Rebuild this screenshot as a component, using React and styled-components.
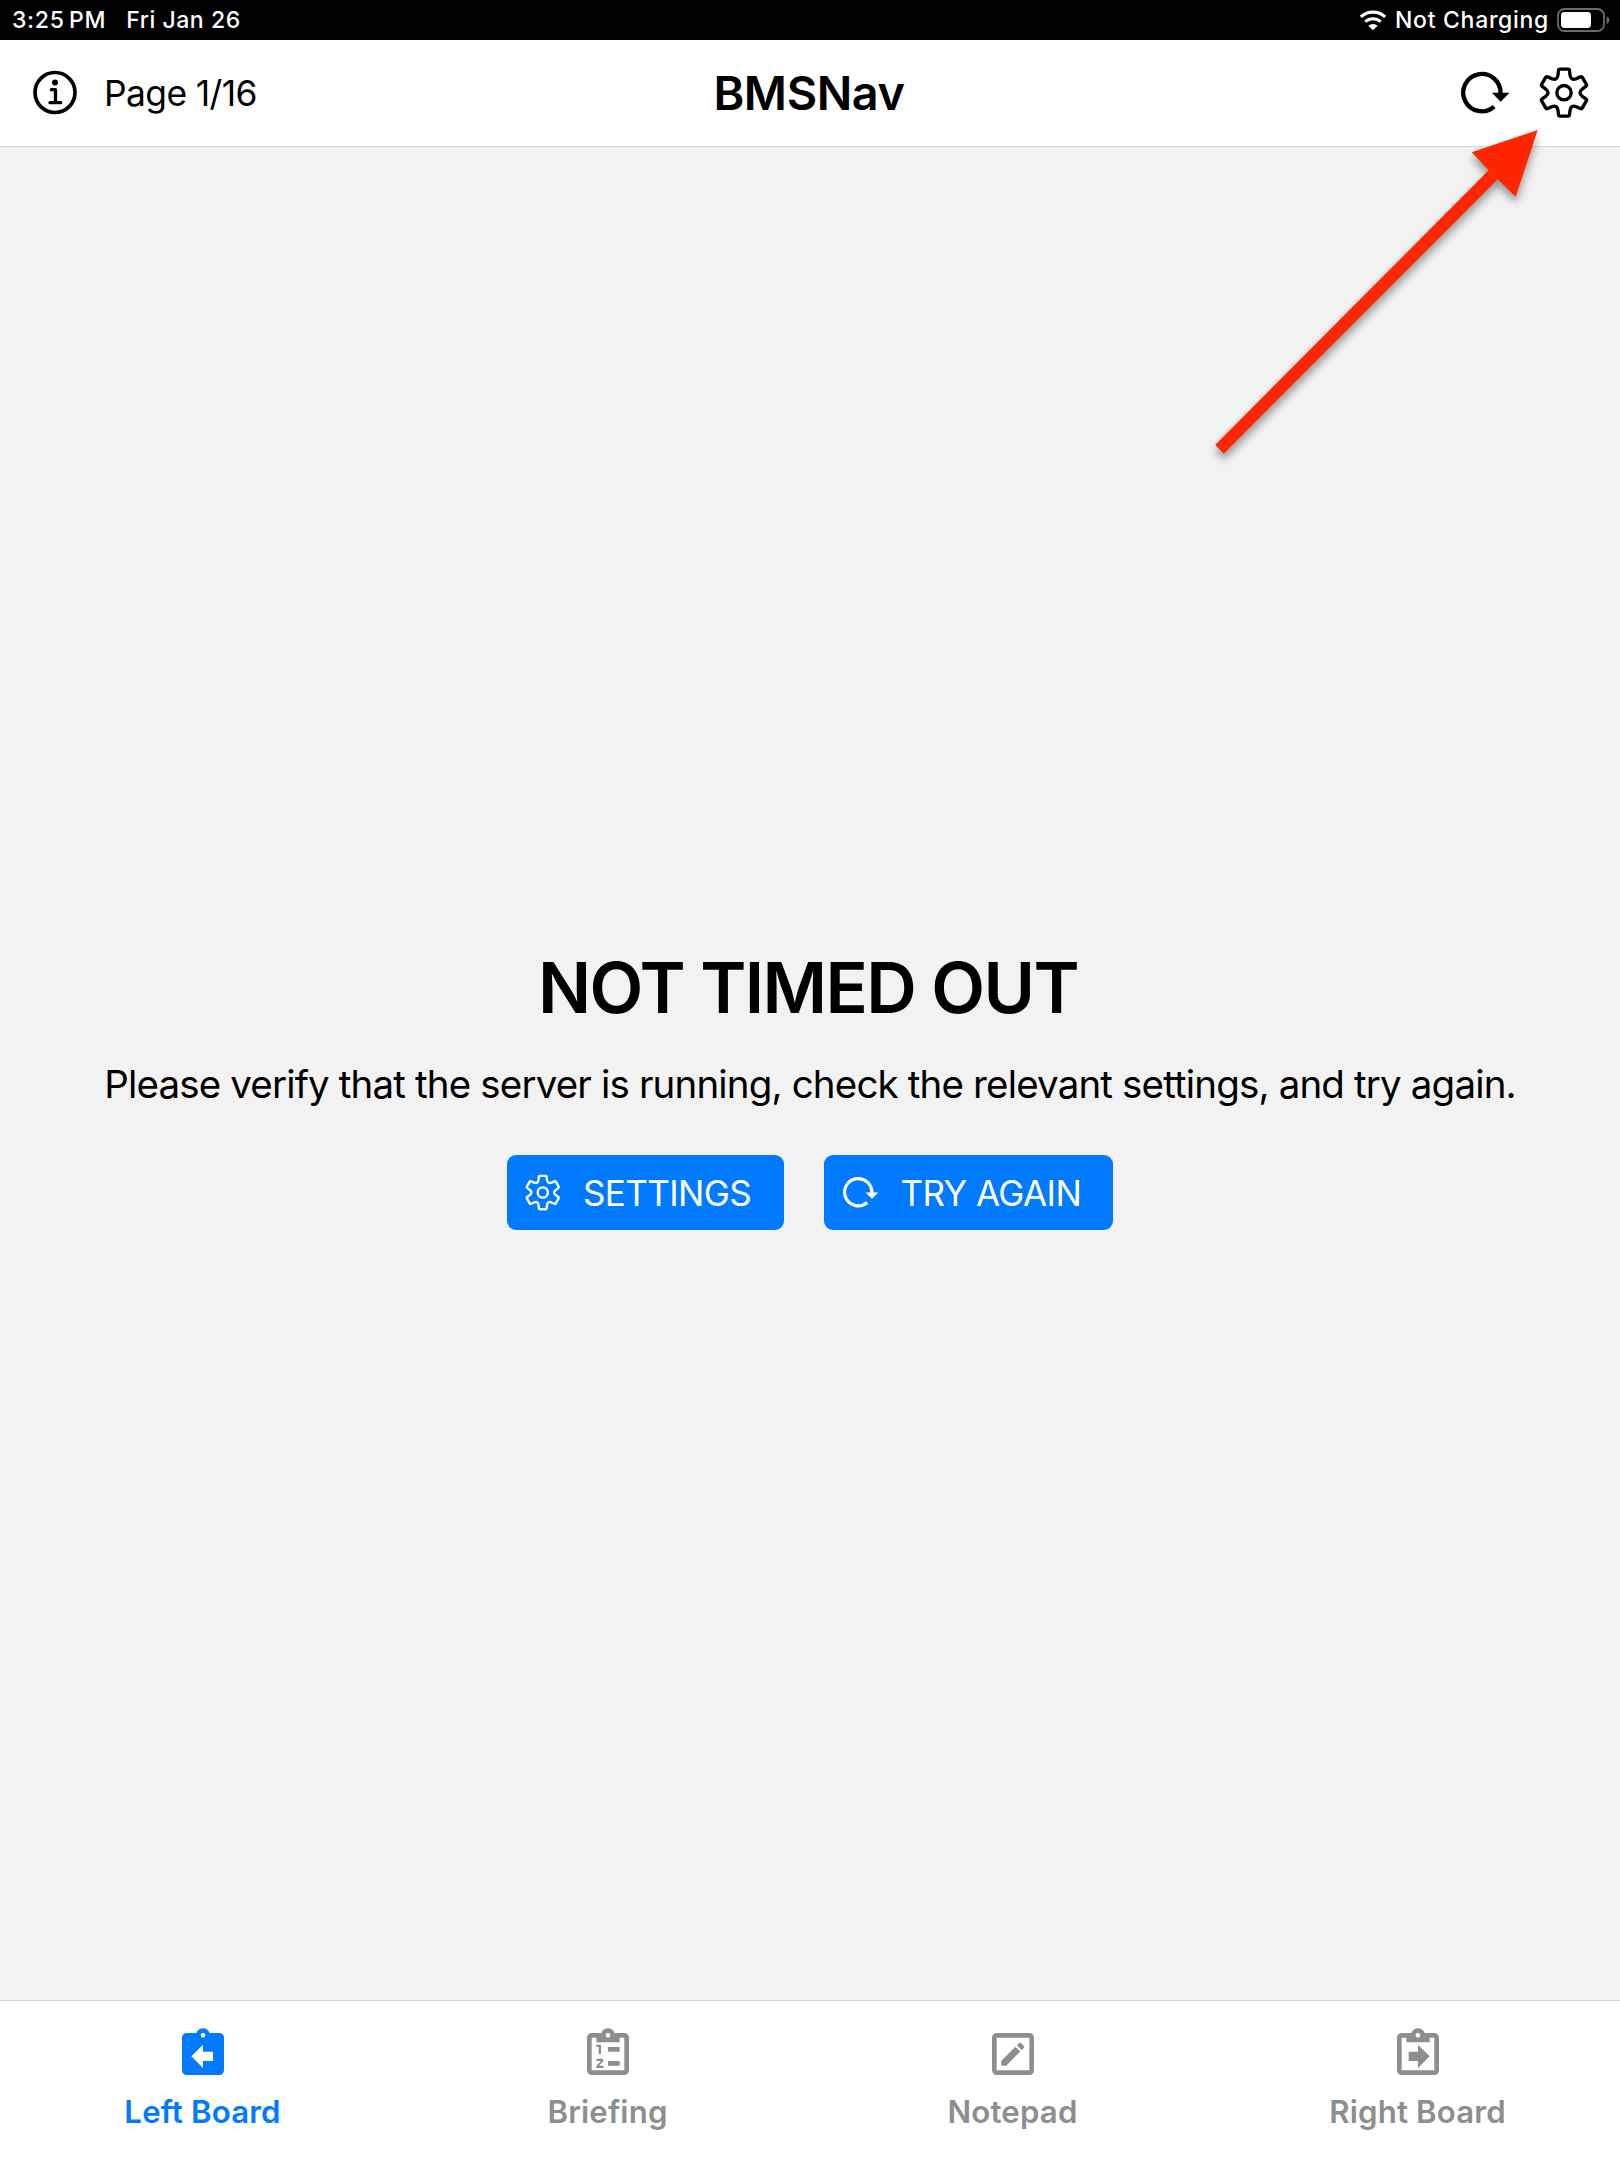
import React from "react";
import styled, { createGlobalStyle } from "styled-components";

const GlobalStyle = createGlobalStyle`
  * { box-sizing: border-box; }
  body {
    margin: 0;
    background: #f2f2f2;
    color: #000;
    font-family: Inter, "Liberation Sans", sans-serif;
  }
  svg { display: block; flex: none; overflow: visible; }
`;

const Screen = styled.div`
  position: relative;
  display: flex;
  flex-direction: column;
  width: 1620px;
  height: 2160px;
  overflow: hidden;
  background: #f2f2f2;
`;

const StatusBar = styled.div`
  display: flex;
  align-items: center;
  justify-content: space-between;
  height: 40px;
  padding: 0 10px 0 12px;
  background: #000;
  color: #fff;
  font-size: 23px;
  font-weight: 500;
  line-height: 40px;
  letter-spacing: 0.7px;
  white-space: nowrap;
`;

const StatusGroup = styled.div`
  display: flex;
  align-items: center;
  gap: ${(p) => p.$gap}px;
`;

const Clock = styled.span`
  word-spacing: -2.4px;
`;

const DateLabel = styled.span`
  letter-spacing: 0.55px;
`;

const Header = styled.header`
  display: grid;
  grid-template-columns: 1fr auto 1fr;
  align-items: center;
  height: 107px;
  padding: 0 31px 0 33px;
  background: #fff;
  border-bottom: 1px solid #d8d8d8;
  white-space: nowrap;
`;

const HeaderSide = styled.div`
  display: flex;
  align-items: center;
  justify-content: ${(p) => (p.$end ? "flex-end" : "flex-start")};
  gap: ${(p) => p.$gap}px;
`;

const PageLabel = styled.span`
  font-size: 35.4px;
  letter-spacing: -0.6px;
`;

const Title = styled.h1`
  margin: 0 4px 0 0;
  font-size: 46.8px;
  font-weight: 600;
  letter-spacing: -0.4px;
`;

const Content = styled.main`
  flex: 1;
  display: flex;
  flex-direction: column;
  align-items: center;
  padding-top: 800px;
`;

const Headline = styled.h2`
  margin: 0 4px 0 0;
  font-size: 70px;
  font-weight: 600;
  line-height: 81px;
  letter-spacing: -1.6px;
`;

const Message = styled.p`
  margin: 31px 0 46px;
  font-size: 38.5px;
  line-height: 50px;
  letter-spacing: -0.84px;
  white-space: nowrap;
`;

const Actions = styled.div`
  display: flex;
  gap: 40px;
`;

const ActionButton = styled.button`
  display: flex;
  align-items: center;
  gap: ${(p) => p.$gap}px;
  width: ${(p) => p.$width}px;
  height: 75px;
  padding: 0 0 0 ${(p) => p.$inset}px;
  border: 0;
  border-radius: 9px;
  background: #007aff;
  color: #fff;
  font: 400 35px Inter, "Liberation Sans", sans-serif;
  letter-spacing: -0.6px;
  white-space: nowrap;
`;

const TabBar = styled.nav`
  display: grid;
  grid-template-columns: repeat(4, 1fr);
  height: 160px;
  background: #fff;
  border-top: 1px solid #d8d8d8;
`;

const Tab = styled.div`
  display: flex;
  flex-direction: column;
  align-items: center;
  padding-top: 25px;
  gap: 10px;
  color: ${(p) => (p.$active ? "#007aff" : "#8e8e8f")};
  font-size: 31.2px;
  font-weight: 600;
  line-height: 40px;
  letter-spacing: 0.15px;
`;

const Pointer = styled.svg`
  position: absolute;
  left: 1200px;
  top: 120px;
  filter: drop-shadow(0 6px 4px rgba(0, 0, 0, 0.38));
  pointer-events: none;
`;

function WifiIcon() {
  return (
    <svg width="28" height="20" viewBox="-42 -60 84 60" fill="none" stroke="#fff">
      <path d="M-36.5 -39.1A53.5 53.5 0 0 1 36.5 -39.1" strokeWidth="9.5" />
      <path d="M-23.2 -24.9A34 34 0 0 1 23.2 -24.9" strokeWidth="9" />
      <path d="M0 1L-14 -12.5A20 20 0 0 1 14 -12.5Z" fill="#fff" stroke="none" />
    </svg>
  );
}

function BatteryIcon() {
  return (
    <svg width="53" height="24" viewBox="0 0 53 24">
      <rect x="1" y="1" width="46" height="22" rx="6.5" fill="none" stroke="#6c6c6c" strokeWidth="1.8" />
      <rect x="4" y="4" width="30" height="16" rx="3.4" fill="#fff" />
      <path d="M49.6 8.2C53.2 9.4 53.2 14.8 49.6 16Z" fill="#6c6c6c" />
    </svg>
  );
}

function InfoIcon() {
  return (
    <svg width="44" height="44" viewBox="-66 -64.5 132 132" fill="none" stroke="currentColor">
      <circle r="60" strokeWidth="11" />
      <circle cy="-30" r="9" fill="currentColor" stroke="none" />
      <path d="M-11 -8.5H1.5V30.5M-15 30.5H17" strokeWidth="10" strokeLinecap="round" strokeLinejoin="round" />
    </svg>
  );
}

const turn = ([x, y], deg) => {
  const a = (deg * Math.PI) / 180;
  const px = x * Math.cos(a) - y * Math.sin(a);
  const py = x * Math.sin(a) + y * Math.cos(a);
  return px.toFixed(2) + " " + py.toFixed(2);
};

const gearPath = (() => {
  let d = "M" + turn([-18, -53], 0);
  for (let k = 0; k < 6; k += 1) {
    const a = k * 60;
    d += `L${turn([-16.6, -66], a)}Q${turn([-16.2, -70.5], a)} ${turn([-12, -70.5], a)}`;
    d += `L${turn([12, -70.5], a)}Q${turn([16.2, -70.5], a)} ${turn([16.6, -66], a)}`;
    d += `L${turn([18, -53], a)}C${turn([20, -41], a)} ${turn([-20, -41], a + 60)} ${turn([-18, -53], a + 60)}`;
  }
  return d + "Z";
})();

function GearIcon({ size }) {
  return (
    <svg width={size} height={size} viewBox="-75 -74 150 150" fill="none" stroke="currentColor" strokeWidth="10">
      <path d={gearPath} strokeLinejoin="round" />
      <circle r="21.5" />
    </svg>
  );
}

function ReloadIcon({ size }) {
  return (
    <svg width={size} height={size} viewBox="-62.5 -71 146 146">
      <path d="M56 3A56 56 0 1 0 37 42" fill="none" stroke="currentColor" strokeWidth="13" />
      <path d="M30 0.5H83L56.5 27Z" fill="currentColor" />
    </svg>
  );
}

const tabPaths = {
  left: "M19 3h-4.18C14.4 1.84 13.3 1 12 1s-2.4.84-2.82 2H5a2 2 0 0 0-2 2v14a2 2 0 0 0 2 2h14a2 2 0 0 0 2-2V5a2 2 0 0 0-2-2zm-7 0a1 1 0 1 1 0 2 1 1 0 0 1 0-2zm4.3 12H12v3l-5-5 5-5v3h4.3z",
  briefing:
    "M19 3h-4.18C14.4 1.84 13.3 1 12 1s-2.4.84-2.82 2H5a2 2 0 0 0-2 2v14a2 2 0 0 0 2 2h14a2 2 0 0 0 2-2V5a2 2 0 0 0-2-2zm-7 0a1 1 0 1 1 0 2 1 1 0 0 1 0-2zM7 7h10V5h2v14H5V5h2zM12 9h5v2h-5zM12 15h5v2h-5zM7 8h2v4H8V9H7zM7 14h2.25a.75.75 0 0 1 .54 1.27L8.12 17H10v1H7v-.92L9 15H7z",
  notepad:
    "M19 19V5H5v14h14m0-16a2 2 0 0 1 2 2v14a2 2 0 0 1-2 2H5a2 2 0 0 1-2-2V5a2 2 0 0 1 2-2h14m-2.3 6.35l-1 1-2.05-2.05 1-1c.21-.22.56-.22.77 0l1.28 1.28c.22.21.22.56 0 .77M7 14.94l6.06-6.06 2.06 2.06L9.06 17H7v-2.06z",
  right:
    "M19 3h-4.18C14.4 1.84 13.3 1 12 1s-2.4.84-2.82 2H5a2 2 0 0 0-2 2v14a2 2 0 0 0 2 2h14a2 2 0 0 0 2-2V5a2 2 0 0 0-2-2zm-7 0a1 1 0 1 1 0 2 1 1 0 0 1 0-2zM7 7h10V5h2v14H5V5h2zM12 18l5-5-5-5v3H8v4h4z",
};

const tabs = [
  { id: "left", label: "Left Board", active: true },
  { id: "briefing", label: "Briefing" },
  { id: "notepad", label: "Notepad" },
  { id: "right", label: "Right Board" },
];

export default function App() {
  return (
    <Screen>
      <GlobalStyle />
      <StatusBar>
        <StatusGroup $gap={20}>
          <Clock>3:25 PM</Clock>
          <DateLabel>Fri Jan 26</DateLabel>
        </StatusGroup>
        <StatusGroup $gap={8}>
          <WifiIcon />
          <span>Not Charging</span>
          <BatteryIcon />
        </StatusGroup>
      </StatusBar>

      <Header>
        <HeaderSide $gap={27}>
          <InfoIcon />
          <PageLabel>Page 1/16</PageLabel>
        </HeaderSide>
        <Title>BMSNav</Title>
        <HeaderSide $end $gap={29}>
          <ReloadIcon size={48.7} />
          <GearIcon size={50} />
        </HeaderSide>
      </Header>

      <Content>
        <Headline>NOT TIMED OUT</Headline>
        <Message>Please verify that the server is running, check the relevant settings, and try again.</Message>
        <Actions>
          <ActionButton $width={277} $inset={18} $gap={22.5}>
            <GearIcon size={35.5} />
            SETTINGS
          </ActionButton>
          <ActionButton $width={289} $inset={19} $gap={22}>
            <ReloadIcon size={35.5} />
            TRY AGAIN
          </ActionButton>
        </Actions>
      </Content>

      <TabBar>
        {tabs.map((tab) => (
          <Tab key={tab.id} $active={tab.active}>
            <svg width="56" height="56" viewBox="0 0 24 24">
              <path d={tabPaths[tab.id]} fill="currentColor" fillRule="evenodd" />
            </svg>
            <span>{tab.label}</span>
          </Tab>
        ))}
      </TabBar>

      <Pointer width="360" height="350" viewBox="0 0 360 350">
        <path d="M337.7 10L271.7 32.3L288.7 50.3L15.3 324.7L23.7 333.7L297.7 59.3L315.7 76.7Z" fill="#ff2600" />
      </Pointer>
    </Screen>
  );
}
